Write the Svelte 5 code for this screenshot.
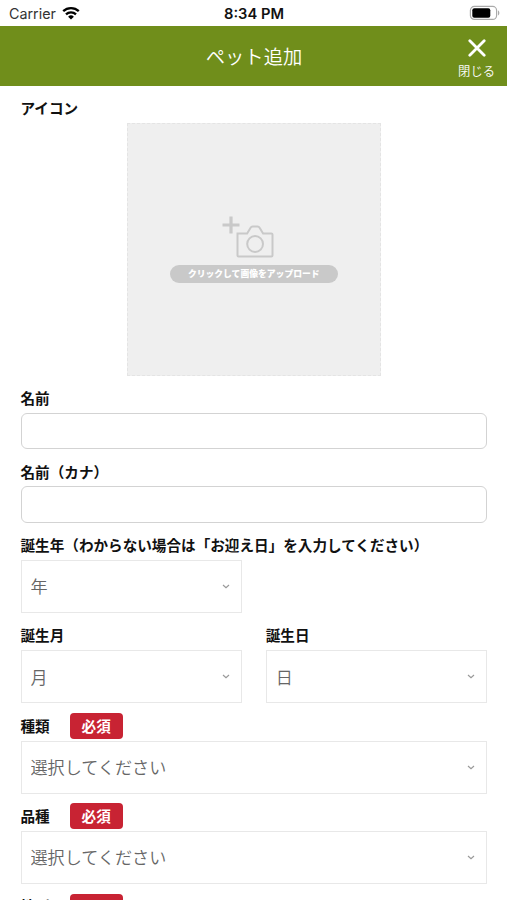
<script lang="ts">
  let name = "";
  let nameKana = "";
  let year = "";
  let month = "";
  let day = "";

  let details = [
    { id: "kind", label: "種類", value: "" },
    { id: "breed", label: "品種", value: "" },
    { id: "sex", label: "性別", value: "" },
  ];

  const months = Array.from({ length: 12 }, (_, i) => i + 1);
  const days = Array.from({ length: 31 }, (_, i) => i + 1);
  const years = Array.from({ length: 30 }, (_, i) => 2021 - i);
</script>

<div class="screen">
  <div class="status-bar">
    <div class="carrier">
      <span>Carrier</span>
      <svg class="wifi" viewBox="0 0 18 14" width="18" height="14">
        <path d="M1.2 5.2a11.2 11.2 0 0 1 15.6 0" />
        <path d="M4 8.3a7.2 7.2 0 0 1 10 0" />
        <path class="dot" d="M9 13.6 6.1 10.7a4.2 4.2 0 0 1 5.8 0z" />
      </svg>
    </div>
    <div class="time">8:34 PM</div>
    <svg class="battery" viewBox="0 0 32 16" width="32" height="16">
      <rect class="shell" x="1.4" y="1.4" width="26.2" height="13" rx="4" />
      <rect x="3.3" y="3.2" width="18" height="9.5" rx="2" />
      <path class="tip" d="M29 5.6c1.8.6 1.8 4.2 0 4.8z" />
    </svg>
  </div>

  <header>
    <h1>ペット追加</h1>
    <button type="button" class="close">
      <svg viewBox="0 0 18 18" width="18" height="18">
        <path d="M1.8 1.8l14.4 14.4M16.2 1.8L1.8 16.2" />
      </svg>
      <span>閉じる</span>
    </button>
  </header>

  <form on:submit|preventDefault>
    <div class="field">
      <div class="label">アイコン</div>
      <button type="button" class="upload">
        <svg viewBox="0 0 52 42" width="52" height="42">
          <path class="plus" d="M9 .5v17M.5 9h17" />
          <path
            d="M15.6 17.5h9.5l3.5-5.8q.7-1.2 2-1.2h5q1.3 0 2 1.2l3.5 5.8h8.3q1.1 0 1.1 1.1v20.8q0 1.1-1.1 1.1H16.6q-1.1 0-1.1-1.1V17.5z"
          />
          <circle cx="33.1" cy="28" r="7.9" />
        </svg>
        <span>クリックして画像をアップロード</span>
      </button>
    </div>

    <div class="field">
      <label class="label" for="name">名前</label>
      <input id="name" type="text" bind:value={name} />
    </div>

    <div class="field">
      <label class="label" for="name-kana">名前（カナ）</label>
      <input id="name-kana" type="text" bind:value={nameKana} />
    </div>

    <div class="field">
      <label class="label" for="year">誕生年（わからない場合は「お迎え日」を入力してください）</label>
      <div class="select half">
        <select id="year" bind:value={year}>
          <option value="">年</option>
          {#each years as y}
            <option value={y}>{y}</option>
          {/each}
        </select>
        <svg viewBox="0 0 8 5" width="8" height="5"><path d="M1 1l3 2.6L7 1" /></svg>
      </div>
    </div>

    <div class="row">
      <div class="field">
        <label class="label" for="month">誕生月</label>
        <div class="select">
          <select id="month" bind:value={month}>
            <option value="">月</option>
            {#each months as m}
              <option value={m}>{m}</option>
            {/each}
          </select>
          <svg viewBox="0 0 8 5" width="8" height="5"><path d="M1 1l3 2.6L7 1" /></svg>
        </div>
      </div>
      <div class="field">
        <label class="label" for="day">誕生日</label>
        <div class="select">
          <select id="day" bind:value={day}>
            <option value="">日</option>
            {#each days as d}
              <option value={d}>{d}</option>
            {/each}
          </select>
          <svg viewBox="0 0 8 5" width="8" height="5"><path d="M1 1l3 2.6L7 1" /></svg>
        </div>
      </div>
    </div>

    {#each details as item}
      <div class="field">
        <label class="label" for={item.id}>
          {item.label}
          <span class="required">必須</span>
        </label>
        <div class="select">
          <select id={item.id} bind:value={item.value}>
            <option value="">選択してください</option>
          </select>
          <svg viewBox="0 0 8 5" width="8" height="5"><path d="M1 1l3 2.6L7 1" /></svg>
        </div>
      </div>
    {/each}
  </form>
</div>

<style>
  :global(body) {
    margin: 0;
    background: #fff;
  }

  .screen {
    height: 900px;
    overflow: hidden;
    font-family: "Noto Sans CJK JP", sans-serif;
    color: #111;
  }

  .status-bar {
    display: grid;
    grid-template-columns: 1fr auto 1fr;
    align-items: center;
    height: 26px;
    padding: 0 6px 0 9px;
    box-sizing: border-box;
    font-family: Inter, sans-serif;
    font-size: 14.3px;
  }

  .carrier {
    display: flex;
    align-items: center;
    gap: 6px;
    padding-top: 1px;
    color: #333;
  }

  .wifi {
    margin-bottom: 2px;
    fill: none;
    stroke: #000;
    stroke-width: 2.3;
  }

  .wifi .dot {
    fill: #000;
    stroke: none;
  }

  .time {
    padding: 1px 2px 0 0;
    font-size: 14.7px;
    font-weight: 600;
  }

  .battery {
    justify-self: end;
  }

  .battery .shell {
    fill: none;
    stroke: #aaa;
    stroke-width: 1.2;
  }

  .battery .tip {
    fill: #aaa;
  }

  header {
    display: grid;
    grid-template-columns: 1fr auto 1fr;
    align-items: center;
    height: 60px;
    padding: 0 12px;
    background: #708e1b;
    color: #fff;
  }

  h1 {
    grid-column: 2;
    margin: 0;
    padding-left: 1px;
    font-size: 19.3px;
    font-weight: 350;
  }

  .close {
    display: flex;
    flex-direction: column;
    align-items: center;
    justify-self: end;
    gap: 6px;
    padding: 7px 0 0;
    border: none;
    background: none;
    color: #fff;
    font-family: inherit;
    font-size: 12.3px;
    font-weight: 350;
    line-height: 17px;
  }

  .close svg {
    stroke: #fff;
    stroke-width: 2.8;
    stroke-linecap: round;
  }

  form {
    display: flex;
    flex-direction: column;
    gap: 8px;
    padding: 7.5px 20px 0 20.5px;
  }

  .label {
    display: flex;
    align-items: center;
    gap: 20px;
    height: 29.2px;
    padding-bottom: 1.6px;
    box-sizing: border-box;
    font-size: 14.6px;
    font-weight: 700;
    white-space: nowrap;
  }

  .required {
    width: 53px;
    height: 26px;
    margin-top: 1.6px;
    border-radius: 4px;
    background: #c82333;
    color: #fff;
    line-height: 25px;
    text-align: center;
  }

  .upload {
    display: flex;
    flex-direction: column;
    align-items: center;
    justify-content: center;
    gap: 7px;
    width: 254px;
    height: 253.2px;
    margin: 0 auto;
    padding: 0;
    border: 1px dashed #e4e4e4;
    background: #efefef;
    font-family: inherit;
  }

  .upload svg {
    margin-right: 11px;
    fill: none;
    stroke: #c9c9c9;
    stroke-width: 2;
  }

  .upload .plus {
    stroke-width: 3.2;
  }

  .upload span {
    width: 168px;
    height: 18.5px;
    border-radius: 10px;
    background: #c9c9c9;
    color: #fff;
    font-size: 8.8px;
    font-weight: 900;
    line-height: 18px;
    text-align: center;
  }

  input {
    display: block;
    width: 100%;
    height: 36.2px;
    padding: 0 10px;
    border: 1.5px solid #d3d3d3;
    border-radius: 6px;
    box-sizing: border-box;
    font-size: 17px;
  }

  .row {
    display: grid;
    grid-template-columns: 1fr 1fr;
    gap: 24px;
  }

  .select {
    display: flex;
    align-items: center;
    height: 53.2px;
    padding: 0 11px 0 9px;
    border: 1.5px solid #e8e8e8;
    box-sizing: border-box;
  }

  .select.half {
    width: calc(50% - 12px);
  }

  select {
    flex: 1;
    min-width: 0;
    height: 100%;
    padding: 0 0 1.5px;
    border: none;
    outline: none;
    background: none;
    appearance: none;
    color: #666;
    font-family: inherit;
    font-size: 17.1px;
    font-weight: 350;
  }

  .select svg {
    fill: none;
    stroke: #999;
    stroke-width: 1.2;
  }
</style>
